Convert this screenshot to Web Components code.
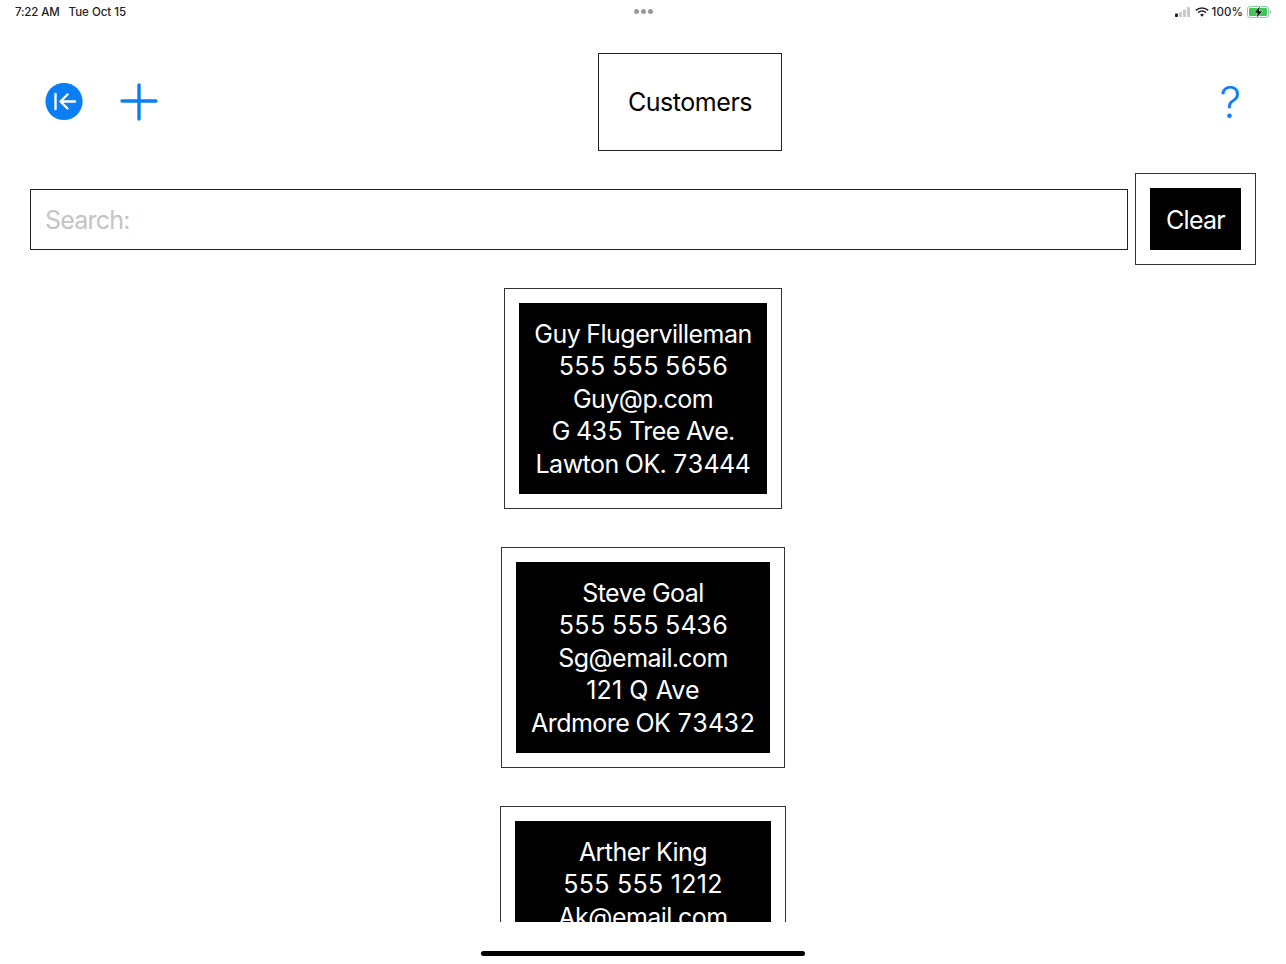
<!DOCTYPE html>
<html>
<head>
<meta charset="utf-8">
<title>Customers</title>
<style>
    html, body {
        margin: 0;
        height: 964px;
        overflow: hidden;
        background: #fff;
        font-family: Inter, "Liberation Sans", sans-serif;
    }
    body {
        display: flex;
        flex-direction: column;
    }
    /* lines with a lot of 1s: the tabular 1 is too wide for them */
    .narrow-ones {
        font-feature-settings: normal;
        letter-spacing: .3px;
    }
</style>
</head>
<body>
<ios-status-bar></ios-status-bar>
<customers-nav>Customers</customers-nav>
<search-row></search-row>
<customer-list>
    <customer-card>
        <div>Guy Flugervilleman</div>
        <div>555 555 5656</div>
        <div>Guy@p.com</div>
        <div>G 435 Tree Ave.</div>
        <div>Lawton OK. 73444</div>
    </customer-card>
    <customer-card>
        <div>Steve Goal</div>
        <div>555 555 5436</div>
        <div>Sg@email.com</div>
        <div class="narrow-ones" style="letter-spacing: .1px">121 Q Ave</div>
        <div>Ardmore OK 73432</div>
    </customer-card>
    <customer-card style="--card-min: 226px">
        <div>Arther King</div>
        <div class="narrow-ones">555 555 1212</div>
        <div>Ak@email.com</div>
    </customer-card>
</customer-list>
<home-indicator></home-indicator>

<script>
(function () {
    function define(name, html) {
        let template = document.createElement("template");
        template.innerHTML = html;
        customElements.define(name, class extends HTMLElement {
            constructor() {
                super();
                let shadowRoot = this.attachShadow({ mode: "open" });
                shadowRoot.appendChild(template.content.cloneNode(true));
            }
        });
    }

    define("ios-status-bar", `
        <style>
            :host {
                display: grid;
                grid-template-columns: 1fr auto 1fr;
                align-items: center;
                height: 23px;
                margin-bottom: 1px;
                padding: 0 14px 0 15px;
                font-size: 11.5px;
                font-weight: 500;
                color: #222;
            }
            .left { display: flex; gap: 9px; }
            .left span:first-child { letter-spacing: -.15px; }
            .dots { display: flex; gap: 2px; }
            .dots i {
                width: 5px;
                height: 5px;
                border-radius: 50%;
                background: #9a9a9e;
            }
            .right {
                display: flex;
                align-items: center;
                justify-content: flex-end;
                gap: 4px;
            }
            .wifi { margin-right: -1px; }
            .pct { letter-spacing: .1px; }
            svg { display: block; }
        </style>
        <div class="left"><span>7:22 AM</span><span>Tue Oct 15</span></div>
        <div class="dots"><i></i><i></i><i></i></div>
        <div class="right">
            <svg width="16" height="10" viewBox="0 0 16 10">
                <rect x="0" y="6.5" width="3" height="3.5" rx=".7" fill="#222"/>
                <rect x="4" y="5" width="3" height="5" rx=".7" fill="#c9c9cc"/>
                <rect x="8" y="2.5" width="3" height="7.5" rx=".7" fill="#c9c9cc"/>
                <rect x="12" y="0" width="3" height="10" rx=".7" fill="#c9c9cc"/>
            </svg>
            <svg class="wifi" width="14" height="10" viewBox="0 0 14 10" fill="none" stroke="#222" stroke-width="1.5">
                <path d="M.8 3.4a9 9 0 0 1 12.4 0"/>
                <path d="M3 5.7a5.8 5.8 0 0 1 8 0"/>
                <path d="M7 9.8 5.1 7.8a2.7 2.7 0 0 1 3.8 0z" fill="#222" stroke="none"/>
            </svg>
            <span class="pct">100%</span>
            <svg width="25" height="12" viewBox="0 0 25 12">
                <rect x=".5" y=".5" width="21" height="11" rx="2.5" fill="none" stroke="#8fce9f"/>
                <rect x="2" y="2" width="18" height="8" rx="1.2" fill="#3ec65c"/>
                <rect x="22.8" y="4.2" width="1.4" height="3.6" rx=".7" fill="#b5b5b8"/>
                <path d="M13 .5 7.5 6.8h3.3L9.7 11.5l5.5-6.3h-3.3z" fill="#111" stroke="#fff" stroke-width=".9" paint-order="stroke"/>
            </svg>
        </div>
    `);

    define("customers-nav", `
        <style>
            :host {
                display: grid;
                grid-template-columns: 553px 184px 1fr;
                align-items: center;
                margin-top: 29px;
                padding: 0 45px;
            }
            .left { display: flex; align-items: center; gap: 37px; }
            svg { display: block; }
            .title {
                box-sizing: border-box;
                height: 98px;
                display: flex;
                align-items: center;
                justify-content: center;
                border: 1px solid #222;
                font-size: 25px;
                letter-spacing: -.45px;
                color: #000;
            }
            .help {
                justify-self: end;
                font-size: 43px;
                font-weight: 350;
                line-height: 1;
                color: #0a7ff5;
            }
        </style>
        <div class="left">
            <svg width="38" height="38" viewBox="0 0 38 38">
                <circle cx="19" cy="18.5" r="18.6" fill="#0a7ff5"/>
                <path d="M10.5 11v15M30 18.5H15.5M22.5 11.5l-7 7 7 7" fill="none" stroke="#fff" stroke-width="2.4" stroke-linecap="round" stroke-linejoin="round"/>
            </svg>
            <svg width="38" height="38" viewBox="0 0 38 38">
                <path d="M19 2v34M2 18h34" fill="none" stroke="#0a7ff5" stroke-width="3.4" stroke-linecap="round"/>
            </svg>
        </div>
        <div class="title"><slot></slot></div>
        <div class="help">?</div>
    `);

    define("search-row", `
        <style>
            :host {
                display: flex;
                align-items: center;
                gap: 7px;
                margin: 22px 30px 0;
            }
            input {
                flex: 1;
                box-sizing: border-box;
                height: 61px;
                min-width: 0;
                padding: 1px 14px 0;
                border: 1px solid #222;
                border-radius: 0;
                outline: none;
                background: #fff;
                font: 25px Inter, "Liberation Sans", sans-serif;
                letter-spacing: -.8px;
            }
            input::placeholder { color: #c4c4c6; opacity: 1; }
            .wrap {
                box-sizing: border-box;
                width: 121px;
                padding: 14px;
                border: 1px solid #333;
            }
            button {
                display: block;
                width: 100%;
                height: 62px;
                padding: 1px 0 0;
                border: none;
                background: #000;
                color: #fff;
                font: 25px Inter, "Liberation Sans", sans-serif;
                letter-spacing: -.75px;
            }
        </style>
        <input type="text" placeholder="Search:">
        <div class="wrap"><button>Clear</button></div>
    `);

    define("customer-list", `
        <style>
            :host {
                display: flex;
                flex-direction: column;
                align-items: center;
                gap: 38px;
                height: 634px;
                margin-top: 23px;
                overflow: hidden;
            }
        </style>
        <slot></slot>
    `);

    define("customer-card", `
        <style>
            :host {
                display: block;
                flex: none;
                padding: 14px;
                border: 1px solid #333;
            }
            .inner {
                padding: 14.8px 15px 13.7px;
                min-width: var(--card-min, 0);
                background: #000;
                color: #fff;
                font-size: 25px;
                font-feature-settings: "tnum";
                letter-spacing: -.53px;
                line-height: 32.5px;
                text-align: center;
                white-space: nowrap;
            }
        </style>
        <div class="inner"><slot></slot></div>
    `);

    define("home-indicator", `
        <style>
            :host {
                display: flex;
                justify-content: center;
                margin-top: 29px;
            }
            div {
                width: 324px;
                height: 5px;
                border-radius: 3px;
                background: #000;
            }
        </style>
        <div></div>
    `);
})();
</script>
</body>
</html>
